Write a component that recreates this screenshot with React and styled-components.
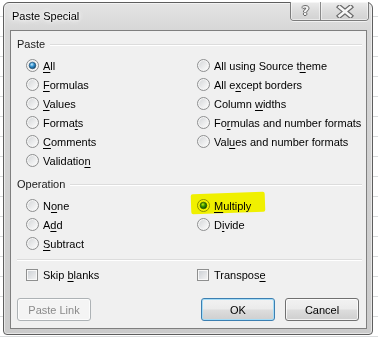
import React, { useId } from 'react';
import styled, { createGlobalStyle } from 'styled-components';

const GlobalStyle = createGlobalStyle`
  html, body {
    margin: 0;
    padding: 0;
  }
  body {
    width: 378px;
    height: 337px;
    overflow: hidden;
    background: #fff repeating-linear-gradient(
      to bottom,
      transparent 0,
      transparent 16px,
      #dadcdd 16px,
      #dadcdd 17px,
      transparent 17px,
      transparent 20px
    );
    font-family: "Liberation Sans", Arial, sans-serif;
    font-size: 11px;
    color: #000;
  }
`;

const Window = styled.div`
  box-sizing: border-box;
  margin: 2px 0 0 3px;
  width: 370px;
  height: 333px;
  border: 1px solid #5e5e5e;
  border-radius: 6px 6px 4px 4px;
  background: linear-gradient(#e4e4e4, #d6d6d6 28px, #cbcbcb);
  box-shadow: inset 0 0 0 1px rgba(255, 255, 255, 0.55);
  padding: 0 5px 5px 6px;
  display: flex;
  flex-direction: column;
`;

const TitleBar = styled.div`
  height: 27px;
  display: flex;
  align-items: flex-start;
  flex-shrink: 0;
`;

const Title = styled.div`
  padding-left: 2px;
  line-height: 27px;
  color: #000;
  text-shadow: 0 0 6px #fff, 0 0 10px #fff, 0 0 3px #fff;
`;

const CaptionGroup = styled.div`
  margin-left: auto;
  margin-top: -1px;
  margin-right: -2px;
  height: 18px;
  display: flex;
  border: 1px solid #7c7c7c;
  border-top: none;
  border-radius: 0 0 4px 4px;
  overflow: hidden;
  box-shadow: 0 1px 0 rgba(255, 255, 255, 0.6);
`;

const CaptionButton = styled.div`
  width: ${p => p.$width}px;
  height: 100%;
  display: flex;
  align-items: center;
  justify-content: center;
  background: linear-gradient(#ececec, #dcdcdc 50%, #d2d2d2);
  box-shadow: inset 0 0 0 1px rgba(255, 255, 255, 0.5);
  & + & {
    border-left: 1px solid #8a8a8a;
  }
`;

const HelpGlyph = styled.span`
  font-family: "DejaVu Sans", sans-serif;
  font-weight: bold;
  font-size: 13px;
  color: #f3f3f3;
  text-shadow: 1px 0 0 #6a6a6a, -1px 0 0 #6a6a6a, 0 1px 0 #6a6a6a, 0 -1px 0 #6a6a6a;
  margin-top: -1px;
`;

const Client = styled.div`
  flex: 1;
  border: 1px solid #7f7f7f;
  background: #f0f0f0;
  padding: 5px 4px 0 6px;
  display: flex;
  flex-direction: column;
`;

const GroupHeader = styled.div`
  height: 16px;
  display: flex;
  align-items: center;
  gap: 5px;
  margin-top: ${p => p.$top || 0}px;
  color: #1a1a1a;
  &::after {
    content: '';
    flex: 1;
    height: 1px;
    background: #dcdcdc;
    box-shadow: 0 1px 0 #fff;
  }
`;

const OptionGrid = styled.div`
  display: grid;
  grid-template-columns: 171px 1fr;
  grid-auto-flow: column;
  grid-template-rows: repeat(${p => p.$rows}, 19px);
  margin-top: 4px;
  padding-left: 9px;
`;

const Option = styled.div`
  position: relative;
  display: flex;
  align-items: center;
  gap: 4px;
  white-space: nowrap;
  ${p => p.$marked && `
    &::after {
      content: '';
      position: absolute;
      left: -6px;
      top: -3px;
      width: 74px;
      height: 20px;
      background: #ffff00;
      mix-blend-mode: multiply;
      border-radius: 2px;
      transform: rotate(-2deg);
    }
  `}
`;

const Key = styled.span`
  text-decoration: underline;
  text-underline-offset: 2px;
`;

const Separator = styled.div`
  height: 1px;
  margin-top: 6px;
  background: #dcdcdc;
  box-shadow: 0 1px 0 #fff;
`;

const CheckRow = styled.div`
  display: grid;
  grid-template-columns: 171px 1fr;
  height: 19px;
  margin-top: 5px;
  padding-left: 9px;
`;

const Box = styled.span`
  box-sizing: border-box;
  width: 12px;
  height: 12px;
  margin: 0 1px 0 0;
  border: 1px solid #8e8f8f;
  background: linear-gradient(135deg, #c9cdd2, #f5f5f5);
  box-shadow: inset 0 0 0 1px #f8f8f8;
`;

const ButtonRow = styled.div`
  display: flex;
  gap: 10px;
  margin-top: 14px;
  padding-right: 3px;
`;

const Button = styled.button`
  box-sizing: border-box;
  width: 74px;
  height: 23px;
  padding: 0;
  font: inherit;
  border-radius: 3px;
  border: 1px solid ${p => (p.disabled ? '#adb2b5' : p.$default ? '#3c7fb1' : '#707070')};
  color: ${p => (p.disabled ? '#8a8a8a' : '#000')};
  background: ${p =>
    p.disabled
      ? '#f4f4f4'
      : 'linear-gradient(#f2f2f2 0%, #ebebeb 48%, #dddddd 52%, #cfcfcf 100%)'};
  box-shadow: inset 0 0 0 1px ${p => (p.$default ? '#a6dcf6' : 'rgba(255,255,255,0.75)')};
  &:first-child {
    margin-right: auto;
  }
`;

const Radio = ({ checked }) => {
  const id = useId();
  return (
    <svg width="13" height="13" viewBox="0 0 13 13">
      <defs>
        <linearGradient id={`${id}f`} x1="0" y1="0" x2="1" y2="1">
          <stop offset="0" stopColor="#d6d8da" />
          <stop offset="1" stopColor="#fbfbfb" />
        </linearGradient>
        <radialGradient id={`${id}d`} cx="0.4" cy="0.35" r="0.7">
          <stop offset="0" stopColor="#c8ecff" />
          <stop offset="0.45" stopColor="#3593cf" />
          <stop offset="1" stopColor="#0e3f66" />
        </radialGradient>
      </defs>
      <circle cx="6.5" cy="6.5" r="6" fill="#f4f4f4" stroke="#8d8e8f" />
      <circle cx="6.5" cy="6.5" r="4.4" fill={`url(#${id}f)`} />
      {checked && <circle cx="6.5" cy="6.5" r="3.3" fill={`url(#${id}d)`} stroke="#1d4a6e" strokeWidth="0.6" />}
    </svg>
  );
};

const RadioOption = ({ checked, marked, children }) => (
  <Option $marked={marked}>
    <Radio checked={checked} />
    <span>{children}</span>
  </Option>
);

const CheckOption = ({ children }) => (
  <Option>
    <Box />
    <span>{children}</span>
  </Option>
);

const CloseGlyph = () => (
  <svg width="18" height="13" viewBox="0 0 18 13">
    <path d="M3.5 2 L14.5 11 M14.5 2 L3.5 11" stroke="#6a6a6a" strokeWidth="5" strokeLinecap="square" />
    <path d="M3.5 2 L14.5 11 M14.5 2 L3.5 11" stroke="#f6f6f6" strokeWidth="2.6" strokeLinecap="square" />
  </svg>
);

export default function App() {
  return (
    <>
      <GlobalStyle />
      <Window>
        <TitleBar>
          <Title>Paste Special</Title>
          <CaptionGroup>
            <CaptionButton $width={29}>
              <HelpGlyph>?</HelpGlyph>
            </CaptionButton>
            <CaptionButton $width={47}>
              <CloseGlyph />
            </CaptionButton>
          </CaptionGroup>
        </TitleBar>
        <Client>
          <GroupHeader>Paste</GroupHeader>
          <OptionGrid $rows={6}>
            <RadioOption checked><Key>A</Key>ll</RadioOption>
            <RadioOption><Key>F</Key>ormulas</RadioOption>
            <RadioOption><Key>V</Key>alues</RadioOption>
            <RadioOption>Forma<Key>t</Key>s</RadioOption>
            <RadioOption><Key>C</Key>omments</RadioOption>
            <RadioOption>Validatio<Key>n</Key></RadioOption>
            <RadioOption>All using Source t<Key>h</Key>eme</RadioOption>
            <RadioOption>All e<Key>x</Key>cept borders</RadioOption>
            <RadioOption>Column <Key>w</Key>idths</RadioOption>
            <RadioOption>Fo<Key>r</Key>mulas and number formats</RadioOption>
            <RadioOption>Val<Key>u</Key>es and number formats</RadioOption>
          </OptionGrid>

          <GroupHeader $top={6}>Operation</GroupHeader>
          <OptionGrid $rows={3}>
            <RadioOption>N<Key>o</Key>ne</RadioOption>
            <RadioOption>A<Key>d</Key>d</RadioOption>
            <RadioOption><Key>S</Key>ubtract</RadioOption>
            <RadioOption checked marked><Key>M</Key>ultiply</RadioOption>
            <RadioOption>D<Key>i</Key>vide</RadioOption>
          </OptionGrid>

          <Separator />

          <CheckRow>
            <CheckOption>Skip <Key>b</Key>lanks</CheckOption>
            <CheckOption>Transpos<Key>e</Key></CheckOption>
          </CheckRow>

          <ButtonRow>
            <Button disabled>Paste Link</Button>
            <Button $default>OK</Button>
            <Button>Cancel</Button>
          </ButtonRow>
        </Client>
      </Window>
    </>
  );
}
